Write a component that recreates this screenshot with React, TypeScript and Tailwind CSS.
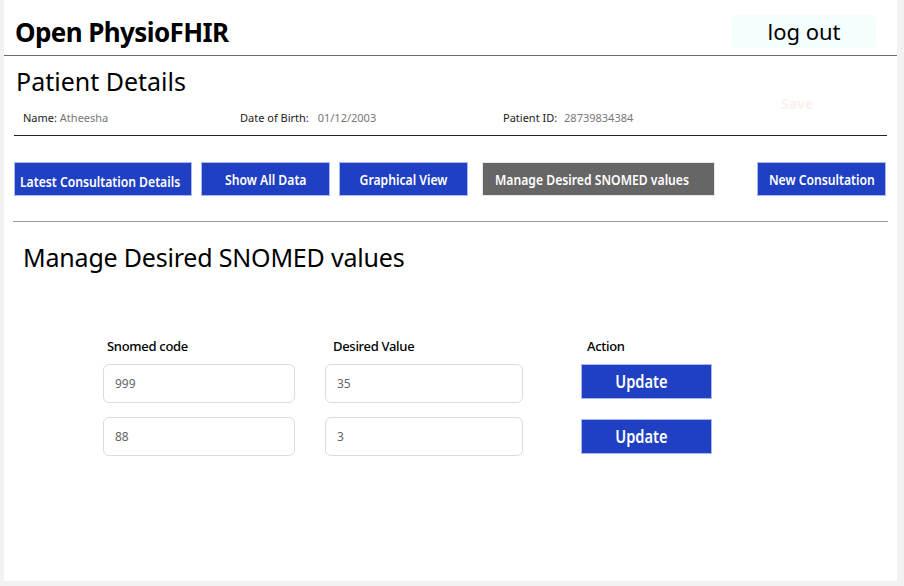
import React, { useState } from 'react';

interface SnomedRow {
  id: number;
  code: string;
  value: string;
}

const navButtons = [
  { label: 'Latest Consultation Details', width: 'w-[178px]', active: false },
  { label: 'Show All Data', width: 'w-[129px]', active: false },
  { label: 'Graphical View', width: 'w-[129px]', active: false },
  { label: 'Manage Desired SNOMED values', width: 'w-[233px]', active: true },
];

const App: React.FC = () => {
  const [rows] = useState<SnomedRow[]>([
    { id: 1, code: '999', value: '35' },
    { id: 2, code: '88', value: '3' },
  ]);

  return (
    <div className="min-h-[586px] bg-[#f2f2f2] font-['Noto_Sans','Open_Sans',sans-serif] text-black">
      <div className="ml-[4px] h-[581px] w-[893px] bg-white">
        {/* header */}
        <div className="flex h-[56px] items-start border-b border-[#6b6b6b]">
          <h1 className="ml-[11px] mt-[14px] text-[26px] font-bold leading-[36px] tracking-[-0.6px]">Open PhysioFHIR</h1>
          <button className="ml-auto mr-[21px] mt-[15px] h-[33px] w-[144px] rounded-[4px] bg-[#f4fffd] text-[22px] leading-[33px]">
            log out
          </button>
        </div>

        {/* patient details */}
        <div className="relative mx-[10px] border-b border-[#222]">
          <h2 className="ml-[2px] mt-[9px] text-[25px] leading-[32px]">Patient Details</h2>
          <div className="flex items-center pb-[9px] pt-[13px] text-[11px] leading-[16px]">
            <div className="ml-[9px] w-[217px]">
              <span className="text-[#222]">Name:</span> <span className="text-[#777]">Atheesha</span>
            </div>
            <div className="w-[263px]">
              <span className="text-[#222]">Date of Birth:</span> <span className="ml-[6px] text-[#777]">01/12/2003</span>
            </div>
            <div>
              <span className="text-[#222]">Patient ID:</span> <span className="ml-[4px] text-[#777]">28739834384</span>
            </div>
          </div>
          <span className="absolute left-[767px] top-[28px] text-[14px] font-bold text-[#fff0f0]">Save</span>
        </div>

        {/* nav buttons */}
        <div className="mx-[9px] flex items-center border-b border-[#9a9a9a] pb-[25px] pl-[1px] pt-[26px]">
          <div className="flex gap-[9px]">
            {navButtons.map(b => (
              <button
                key={b.label}
                className={`flex h-[34px] ${b.width} items-center whitespace-nowrap border text-[14px] font-semibold text-white ${
                  b.active
                    ? 'ml-[5px] justify-start border-[#e6e6e6] bg-[#666666] pl-[12px]'
                    : 'justify-center border-[#a9b8f0] bg-[#1f40c2]'
                }`}
              >
                <span
                  className={`inline-block shrink-0 scale-x-[0.87] ${b.active ? 'origin-left' : 'origin-center'} ${
                    b.label.startsWith('Latest') ? '-translate-x-[3px] translate-y-[2px]' : ''
                  }`}
                >
                  {b.label}
                </span>
              </button>
            ))}
          </div>
          <button className="ml-[42px] flex h-[34px] w-[129px] items-center justify-center whitespace-nowrap border border-[#a9b8f0] bg-[#1f40c2] text-[14px] font-semibold text-white">
            <span className="inline-block shrink-0 scale-x-[0.87]">New Consultation</span>
          </button>
        </div>

        {/* manage section */}
        <h2 className="ml-[19px] mt-[17px] text-[25px] leading-[36px] tracking-[-0.2px]">Manage Desired SNOMED values</h2>

        <div className="ml-[99px] mt-[61px]">
          <div className="flex text-[13px] font-medium leading-[20px] tracking-[-0.3px]">
            <div className="ml-[4px] w-[226px]">Snomed code</div>
            <div className="w-[254px]">Desired Value</div>
            <div>Action</div>
          </div>
          <div className="mt-[8px] flex flex-col gap-[14px]">
            {rows.map((r, i) => (
              <div key={r.id} className="flex items-start">
                <input
                  readOnly
                  value={r.code}
                  className="h-[39px] w-[192px] rounded-[6px] border border-[#dcdcdc] px-[11px] text-[12px] text-[#666] outline-none"
                />
                <input
                  readOnly
                  value={r.value}
                  className="ml-[30px] h-[39px] w-[198px] rounded-[6px] border border-[#dcdcdc] px-[11px] text-[12px] text-[#666] outline-none"
                />
                <button
                  className={`ml-[58px] h-[35px] w-[131px] whitespace-nowrap border border-[#a9b8f0] bg-[#1f40c2] pr-[10px] text-[17px] font-semibold text-white ${
                    i === 1 ? 'mt-[2px]' : ''
                  }`}
                >
                  <span className="inline-block scale-x-[0.86]">Update</span>
                </button>
              </div>
            ))}
          </div>
        </div>
      </div>
    </div>
  );
};

export default App;
